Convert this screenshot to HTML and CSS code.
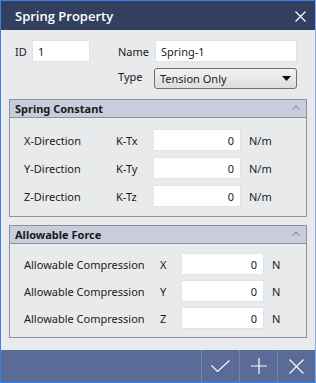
FILE: index.html
```html
<!DOCTYPE html>
<html>
<head>
<meta charset="utf-8">
<link rel="stylesheet" href="styles.css">
</head>
<body>
<div class="window">
  <div class="titlebar">
    <span class="title">Spring Property</span>
    <svg class="close" width="11" height="11" viewBox="0 0 11 11"><path d="M0.5 0.5L10.5 10.5M10.5 0.5L0.5 10.5" stroke="#fff" stroke-width="1.2" fill="none"/></svg>
  </div>
  <div class="content">
    <div class="top">
      <div class="top-row">
        <span class="lbl id-lbl">ID</span>
        <div class="input id-input">1</div>
        <span class="lbl name-lbl">Name</span>
        <div class="input name-input">Spring-1</div>
      </div>
      <div class="top-row type-row">
        <span class="lbl name-lbl type-lbl">Type</span>
        <div class="select">
          <span>Tension Only</span>
          <svg width="9" height="5" viewBox="0 0 9 5"><path d="M0 0H9L4.5 5Z" fill="#111"/></svg>
        </div>
      </div>
    </div>

    <div class="group g1">
      <div class="group-head">
        <span>Spring Constant</span>
        <svg class="caret" width="8" height="5" viewBox="0 0 8 5"><path d="M0.5 4.5L4 1L7.5 4.5" stroke="#777" fill="none"/></svg>
      </div>
      <div class="group-body">
        <div class="row"><span class="c1">X-Direction</span><span class="c2">K-Tx</span><div class="input num w1">0</div><span class="unit">N/m</span></div>
        <div class="row"><span class="c1">Y-Direction</span><span class="c2">K-Ty</span><div class="input num w1">0</div><span class="unit">N/m</span></div>
        <div class="row"><span class="c1">Z-Direction</span><span class="c2">K-Tz</span><div class="input num w1">0</div><span class="unit">N/m</span></div>
      </div>
    </div>

    <div class="group g2">
      <div class="group-head">
        <span>Allowable Force</span>
        <svg class="caret" width="8" height="5" viewBox="0 0 8 5"><path d="M0.5 4.5L4 1L7.5 4.5" stroke="#777" fill="none"/></svg>
      </div>
      <div class="group-body">
        <div class="row"><span class="d1">Allowable Compression</span><span class="d2">X</span><div class="input num w2">0</div><span class="unit">N</span></div>
        <div class="row"><span class="d1">Allowable Compression</span><span class="d2">Y</span><div class="input num w2">0</div><span class="unit">N</span></div>
        <div class="row"><span class="d1">Allowable Compression</span><span class="d2">Z</span><div class="input num w2">0</div><span class="unit">N</span></div>
      </div>
    </div>
  </div>
  <div class="footer">
    <div class="fbtn"><svg width="19" height="12" viewBox="0 0 19 12"><path d="M0.5 5.5L6.5 11.5L18.5 0.5" stroke="#fff" stroke-width="1.1" fill="none"/></svg></div>
    <div class="fbtn"><svg width="16" height="16" viewBox="0 0 16 16"><path d="M8 0V16M0 8H16" stroke="#fff" stroke-width="1.2" fill="none"/></svg></div>
    <div class="fbtn"><svg width="15" height="15" viewBox="0 0 15 15"><path d="M0.5 0.5L14.5 14.5M14.5 0.5L0.5 14.5" stroke="#fff" stroke-width="1.1" fill="none"/></svg></div>
  </div>
</div>
</body>
</html>
```
FILE: styles.css
```css
* { box-sizing: border-box; }
html, body { margin: 0; padding: 0; }
body {
  width: 316px;
  height: 383px;
  font-family: "Noto Sans", "Liberation Sans", sans-serif;
  font-size: 11px;
  color: #1a1a1a;
  overflow: hidden;
}
.window {
  width: 316px;
  height: 383px;
  display: flex;
  flex-direction: column;
  border-left: 1px solid #3d7fe8;
  border-bottom: 1px solid #3d7fe8;
  border-right: 1px solid #7ea9ea;
  border-top: 1px solid #3d7fe8;
  background: #e9eaec;
}
.titlebar {
  height: 29px;
  flex: none;
  background: #333f5e;
  display: flex;
  align-items: center;
  justify-content: space-between;
  padding: 1px 9px 0 14px;
}
.title {
  color: #fff;
  font-family: "Open Sans", sans-serif;
  font-weight: 600;
  font-size: 13px;
}
.close { margin-top: 0; }
.content {
  flex: 1;
  padding: 10px 8px 0 8px;
  display: flex;
  flex-direction: column;
}
.top { height: 59px; padding-top: 0; }
.top-row { display: flex; align-items: center; height: 22px; }
.type-row { margin-top: 6px; height: 21px; }
.lbl { display: block; }
.id-lbl { width: 17px; padding-left: 6px; box-sizing: content-box; }
.input {
  background: #fff;
  border: 1px solid #e2e3e6;
  height: 22px;
  display: flex;
  align-items: center;
  padding: 0 5px;
}
.id-input { width: 58px; }
.name-lbl { margin-left: 28px; width: 37px; }
.name-input { width: 142px; }
.type-lbl { margin-left: 109px; width: 36px; margin-top: -4px; }
.select {
  width: 143px;
  height: 21px;
  border: 1px solid #6f6f6f;
  border-radius: 3px;
  background: linear-gradient(#f3f3f3, #dddddd);
  display: flex;
  align-items: center;
  justify-content: space-between;
  padding: 0 5px 0 5px;
}
.group {
  border: 1px solid #8e9198;
  width: 298px;
  display: flex;
  flex-direction: column;
}
.g1 { height: 118px; }
.g2 { height: 113px; margin-top: 8px; }
.group-head {
  height: 18px;
  flex: none;
  background: #c7cddd;
  border-bottom: 1px solid #8e9198;
  display: flex;
  align-items: center;
  justify-content: space-between;
  padding: 0 6px 0 5px;
  font-weight: 700;
  font-size: 11px;
}
.caret { margin-top: -3px; }
.group-body { padding-top: 11px; padding-left: 14px; }
.g2 .group-body { padding-top: 9px; }
.row { display: flex; align-items: center; height: 22px; margin-bottom: 6px; }
.g2 .row { margin-bottom: 5px; }
.c1 { width: 92px; }
.c2 { width: 37px; }
.d1 { width: 136px; }
.d2 { width: 21px; }
.num { justify-content: flex-end; padding-right: 6px; }
.w1 { width: 88px; }
.w2 { width: 83px; }
.unit { margin-left: 8px; }
.footer {
  height: 32px;
  flex: none;
  background: #5b6b98;
  display: flex;
  justify-content: flex-end;
}
.fbtn {
  width: 38px;
  border-left: 1px solid #7484ae;
  display: flex;
  align-items: center;
  justify-content: center;
}
```
